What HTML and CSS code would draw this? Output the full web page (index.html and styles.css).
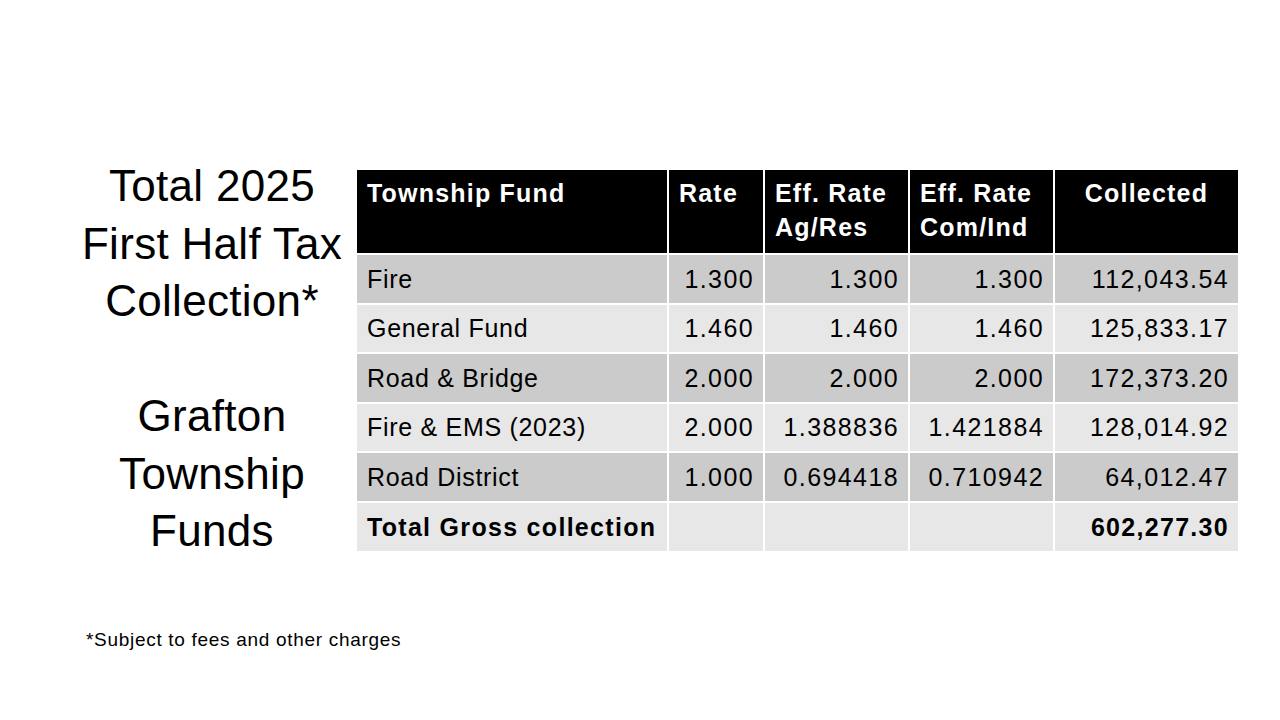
FILE: index.html
```html
<!DOCTYPE html>
<html>
<head>
<meta charset="utf-8">
<link rel="stylesheet" href="styles.css">
</head>
<body>
<div class="slide">
  <div class="main">
    <div class="title">
      <div>Total 2025</div>
      <div>First Half Tax</div>
      <div>Collection*</div>
      <div class="blank">&nbsp;</div>
      <div>Grafton</div>
      <div>Township</div>
      <div>Funds</div>
    </div>
    <table class="funds">
      <colgroup>
        <col class="c1"><col class="c2"><col class="c3"><col class="c4"><col class="c5">
      </colgroup>
      <thead>
        <tr>
          <th>Township Fund</th>
          <th>Rate</th>
          <th>Eff. Rate<br>Ag/Res</th>
          <th>Eff. Rate<br>Com/Ind</th>
          <th class="center">Collected</th>
        </tr>
      </thead>
      <tbody>
        <tr class="dark"><td>Fire</td><td class="n">1.300</td><td class="n">1.300</td><td class="n">1.300</td><td class="n">112,043.54</td></tr>
        <tr class="light"><td>General Fund</td><td class="n">1.460</td><td class="n">1.460</td><td class="n">1.460</td><td class="n">125,833.17</td></tr>
        <tr class="dark"><td>Road &amp; Bridge</td><td class="n">2.000</td><td class="n">2.000</td><td class="n">2.000</td><td class="n">172,373.20</td></tr>
        <tr class="light"><td>Fire &amp; EMS (2023)</td><td class="n">2.000</td><td class="n">1.388836</td><td class="n">1.421884</td><td class="n">128,014.92</td></tr>
        <tr class="dark"><td>Road District</td><td class="n">1.000</td><td class="n">0.694418</td><td class="n">0.710942</td><td class="n">64,012.47</td></tr>
        <tr class="light total"><td>Total Gross collection</td><td></td><td></td><td></td><td class="n">602,277.30</td></tr>
      </tbody>
    </table>
  </div>
  <div class="note">*Subject to fees and other charges</div>
</div>
</body>
</html>
```

FILE: styles.css
```css
html, body {
  margin: 0;
  padding: 0;
  background: #ffffff;
}
body {
  font-family: "Liberation Sans", Arial, sans-serif;
  color: #000000;
}
.slide {
  width: 1280px;
  height: 720px;
  box-sizing: border-box;
  padding-top: 157px;
}
.main {
  display: flex;
  align-items: flex-start;
}
.title {
  width: 280px;
  margin-left: 72px;
  margin-right: 5px;
  text-align: center;
  font-size: 44px;
  letter-spacing: 0.3px;
  line-height: 57.5px;
}
.funds {
  margin-top: 13px;
  border-collapse: collapse;
  width: 881px;
  font-size: 25px;
  letter-spacing: 0.7px;
}
.c1 { width: 311px; }
.c2 { width: 96px; }
.c3 { width: 145px; }
.c4 { width: 145px; }
.c5 { width: 184px; }
.funds th, .funds td {
  border: 2px solid #ffffff;
  padding: 0 10px;
}
.funds tr > :first-child { border-left: none; }
.funds tr > :last-child { border-right: none; }
.funds thead tr > * { border-top: none; }
.funds tbody tr:last-child > * { border-bottom: none; }
.funds th {
  background: #000000;
  color: #ffffff;
  font-weight: bold;
  letter-spacing: 1.2px;
  text-align: left;
  vertical-align: top;
  height: 84px;
  box-sizing: border-box;
  padding-top: 6px;
  line-height: 34px;
}
.funds th.center { text-align: center; }
.funds td {
  height: 49.5px;
  box-sizing: border-box;
  line-height: 30px;
}
.funds .dark td { background: #cbcbcb; }
.funds .light td { background: #e7e7e7; }
.funds td.n {
  text-align: right;
  padding-right: 9px;
  letter-spacing: 1.4px;
}
.funds .total td { font-weight: bold; letter-spacing: 1.3px; }
.note {
  margin-top: 69px;
  margin-left: 86px;
  font-size: 19px;
  letter-spacing: 0.7px;
}
```
